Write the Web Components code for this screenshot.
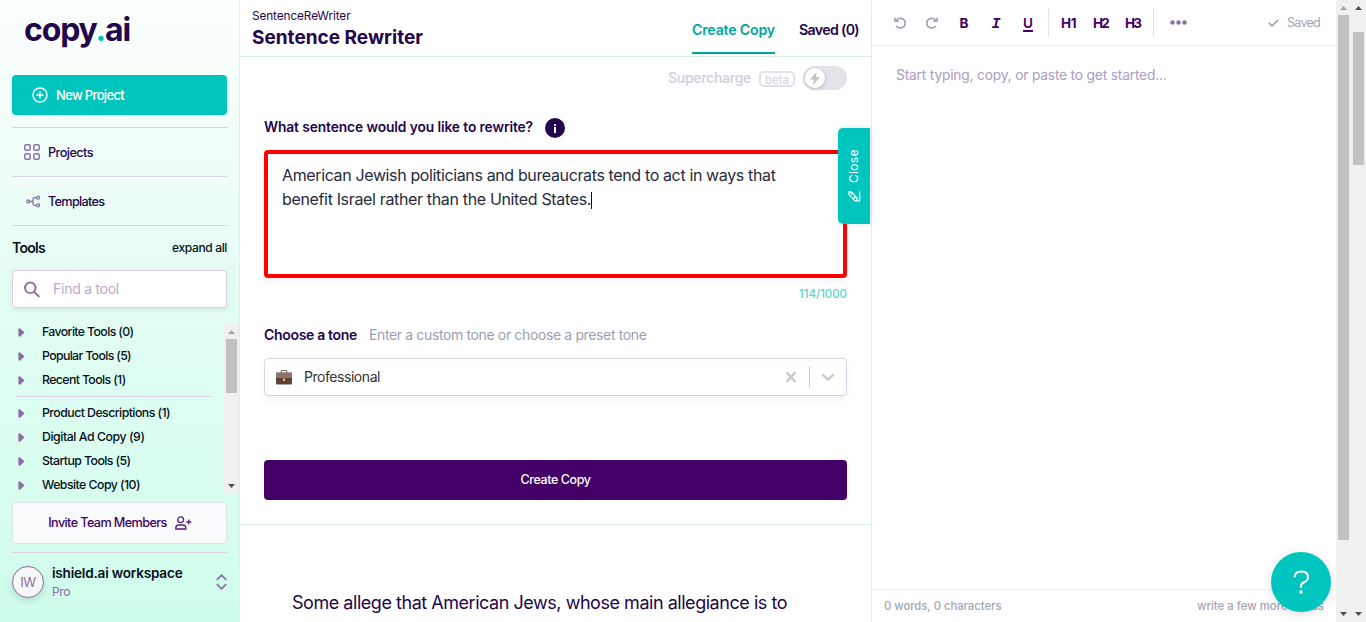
<!DOCTYPE html>
<html lang="en">
<head>
<meta charset="utf-8">
<title>Sentence Rewriter</title>
<style>
html,body{margin:0;height:622px;overflow:hidden;background:#fff}
body{font-family:Inter,"Liberation Sans",sans-serif;color:#23064b}
</style>
</head>
<body>
<copy-app></copy-app>
<script>
function define(name, html, extra) {
  const t = document.createElement('template');
  t.innerHTML = '<style>*{box-sizing:border-box}:host{box-sizing:border-box}svg{display:block;flex:none}</style>' + html;
  customElements.define(name, class extends HTMLElement {
    constructor() {
      super();
      this.attachShadow({mode: 'open'}).appendChild(t.content.cloneNode(true));
    }
    connectedCallback() { if (extra) extra(this); }
  });
}

define('copy-app', `
<style>
:host{display:flex;width:1366px;height:622px;overflow:hidden}
main{width:632px;border-right:1px solid #dcefe8;flex:none}
</style>
<side-bar></side-bar>
<main><tool-header></tool-header><tool-form></tool-form><result-list></result-list></main>
<doc-editor></doc-editor>
<scroll-bar style="--h:622px;--gap:15px;--thumb:525px;--up:#a3a3a3"></scroll-bar>
<scroll-bar style="--h:622px;--gap:32px;--thumb:133px"></scroll-bar>
`);

define('scroll-bar', `
<style>
:host{display:flex;flex-direction:column;align-items:center;width:15px;height:var(--h);background:#f0f0f0;position:relative;flex:none}
.up,.down{height:15px;display:grid;place-items:center;padding-top:1px}
.thumb{width:11px;height:var(--thumb);background:#c1c1c1;margin-top:calc(var(--gap) - 15px)}
.down{margin-top:auto;padding-top:0;height:16px}
</style>
<div class="up"><svg width="7" height="4" viewBox="0 0 7 4"><path d="M0 4 3.5 0 7 4Z" style="fill:var(--up,#4d4d4d)"/></svg></div>
<div class="thumb"></div>
<div class="down"><svg width="7" height="4" viewBox="0 0 7 4"><path d="M0 0 3.5 4 7 0Z" fill="#4d4d4d"/></svg></div>
`);

define('side-bar', `
<style>
:host{display:flex;flex-direction:column;width:240px;height:622px;flex:none;padding:0 12px;border-right:1px solid #dcefe8;background:linear-gradient(#fbfffd 0,#effdf8 27%,#e2fdf3 50%,#d9fdf0 75%,#cffdeb 100%)}
.logo{height:75px;padding:8px 0 0 12px;font-size:32px;font-weight:700;line-height:44px}
.logo i{font-style:normal;color:#00c5be}
.new{height:40px;border-radius:4px;background:#00c5be;color:#fff;display:flex;align-items:center;padding-left:20px;gap:8px;font-size:13px;font-weight:500;margin-bottom:12px}
.tools{--lift:2px;display:flex;justify-content:space-between;align-items:center;height:45px;width:215px;border-top:1px solid #dcd3e8;color:#07101c}
.tools b{font-size:14px;font-weight:600}.tools span{font-size:12px;font-weight:500}
.find{--lift:2px;height:38px;width:215px;flex:none;background:#fff;border:1px solid #dccfe8;border-radius:4px;box-shadow:0 2px 5px #2050401a;display:flex;align-items:center;padding-left:11px;gap:13px;color:#b7aac8;font-size:14px}
.box{height:170px;margin-top:16px;margin-right:-12px;display:flex;justify-content:space-between;overflow:hidden;flex:none}
.list{width:200px;--lift:2px}
.list hr{border:0;border-top:1px solid #dccfe8;height:1px;margin:0 0 8px 4px;width:196px}
.invite{--lift:1px;height:42px;width:215px;margin-top:8px;border:1px solid #e2dfea;border-radius:4px;background:#fafbfd;color:#440066;display:flex;align-items:center;justify-content:center;gap:8px;padding-left:1px;font-size:12.700px;font-weight:500;flex:none}
.ws{margin-top:8px;border-top:1px solid #dccfe8;display:flex;width:215px;height:69px;padding-top:13px}
.av{width:32px;height:32px;border:1px solid #8a6fa3;border-radius:50%;background:#f7f7f9;color:#8a6fa3;display:grid;place-items:center;font-size:13px;box-shadow:0 3px 6px #20504030}
.nm{margin:-1px 0 0 8px;flex:1;color:#07101c;font-size:13.600px;font-weight:600;line-height:16px;display:flex;flex-direction:column;gap:3px;align-items:flex-start}
.nm small{font-size:12px;font-weight:400;color:#8a6fa3}
.ws svg{margin-top:8px}
</style>
<div class="logo"><fit-text w="106">copy<i>.</i>ai</fit-text></div>
<div class="new"><svg width="16" height="16" viewBox="0 0 16 16" fill="none" stroke="#fff" stroke-width="1.4"><circle cx="8" cy="8" r="7"/><path d="M8 4.500v7M4.500 8h7"/></svg><fit-text w="68">New Project</fit-text></div>
<nav-row><svg slot="icon" width="16" height="16" viewBox="0 0 16 16" fill="none" stroke="#8a6fa3" stroke-width="1.500"><rect x=".8" y=".8" width="5.400" height="5.400" rx="1.500"/><rect x="9.800" y=".8" width="5.400" height="5.400" rx="1.500"/><rect x=".8" y="9.800" width="5.400" height="5.400" rx="1.500"/><rect x="9.800" y="9.800" width="5.400" height="5.400" rx="1.500"/></svg><fit-text w="45">Projects</fit-text></nav-row>
<nav-row><svg slot="icon" width="16" height="16" viewBox="0 0 16 16" fill="none" stroke="#8a6fa3" stroke-width="1.300"><circle cx="4.200" cy="8.500" r="1.500"/><circle cx="14" cy="4.700" r="1.500"/><circle cx="14" cy="12.300" r="1.500"/><path d="M5.700 8.500h3.300M12.500 4.700h-2q-1.500 0-1.500 1.500v4.600q0 1.500 1.500 1.500h2"/></svg><fit-text w="56.500">Templates</fit-text></nav-row>
<div class="tools"><b><fit-text w="33">Tools</fit-text></b><span><fit-text w="55">expand all</fit-text></span></div>
<div class="find"><svg width="16" height="17" viewBox="0 0 16 17" fill="none" stroke="#8a6fa3" stroke-width="1.900"><circle cx="6.300" cy="6.800" r="5.300"/><path d="M10.200 10.800 15.300 16"/></svg><fit-text w="66">Find a tool</fit-text></div>
<div class="box"><div class="list">
<tool-group><fit-text w="91.500">Favorite Tools (0)</fit-text></tool-group>
<tool-group><fit-text w="89">Popular Tools (5)</fit-text></tool-group>
<tool-group><fit-text w="83.500">Recent Tools (1)</fit-text></tool-group>
<hr>
<tool-group><fit-text w="128">Product Descriptions (1)</fit-text></tool-group>
<tool-group><fit-text w="102.500">Digital Ad Copy (9)</fit-text></tool-group>
<tool-group><fit-text w="88.500">Startup Tools (5)</fit-text></tool-group>
<tool-group><fit-text w="98">Website Copy (10)</fit-text></tool-group>
</div><scroll-bar style="--h:170px;--gap:15px;--thumb:54px;--up:#a3a3a3"></scroll-bar></div>
<div class="invite"><fit-text w="118.500">Invite Team Members</fit-text><svg width="17" height="14" viewBox="0 0 17 14" fill="none" stroke="#5a1a80" stroke-width="1.300"><circle cx="5.700" cy="3.700" r="2.900"/><path d="M.8 13v-1q0-3 3-3h4q3 0 3 3v1ZM13.800 3.500v5M11.300 6h5"/></svg></div>
<div class="ws"><div class="av"><fit-text w="15.500">IW</fit-text></div><div class="nm"><fit-text w="130.500">ishield.ai workspace</fit-text><small><fit-text w="18">Pro</fit-text></small></div><svg width="11" height="16" viewBox="0 0 11 16" fill="none" stroke="#8a6fa3" stroke-width="1.800"><path d="M.8 5.800 5.500 1.200l4.700 4.600M.8 10.200l4.700 4.600 4.700-4.600"/></svg></div>
`);

define('nav-row', `
<style>
:host{display:flex;align-items:center;height:49px;width:215px;border-top:1px solid #dcd3e8;padding-left:12px;gap:8px;font-size:12.700px;font-weight:500;color:#23064b;flex:none}
</style><slot name="icon"></slot><slot></slot>`);

define('tool-group', `
<style>
:host{display:flex;align-items:center;height:24px;padding:0 0 8px 6px;gap:17px;font-size:12.300px;font-weight:500;color:#07101c}
</style><svg width="7" height="9" viewBox="0 0 7 9"><path d="M.4.500H2.400L6.500 4.500 2.400 8.500H.4Z" fill="#8a6fa3"/></svg><slot></slot>`);

define('tool-header', `
<style>
:host{display:flex;height:57px;border-bottom:1px solid #d5f0e2;padding:0 12px;justify-content:space-between}
.t{padding-top:8px;display:flex;flex-direction:column;align-items:flex-start;font-size:11.800px;line-height:16px}
b{font-size:19px;line-height:28px;font-weight:700}
.tabs{display:flex;gap:24px;font-size:14.200px;font-weight:600;line-height:21px;padding-top:19px}
.on{color:#00a69d;border-bottom:2px solid #00a69d;height:35px}
</style>
<div class="t"><fit-text w="98.500">SentenceReWriter</fit-text><b><fit-text w="171">Sentence Rewriter</fit-text></b></div>
<div class="tabs"><div class="on"><fit-text w="83">Create Copy</fit-text></div><fit-text w="60">Saved (0)</fit-text></div>
`);

define('tool-form', `
<style>
:host{display:block;width:631px;height:468px;border-bottom:1px solid #d5f0e2;padding:8px 24px 0;position:relative}
.sup{height:26px;display:flex;justify-content:flex-end;align-items:center;color:#d3d3dc;font-size:14px;font-weight:600;--lift:1px}
.beta{width:36px;height:16px;border:2px solid #e1e1e9;border-radius:5px;margin:1px 8px 0 8px;display:grid;place-items:center;font-size:11.500px;font-weight:400;--lift:0px}
.sw{width:44px;height:24px;border-radius:12px;background:#e3e3ea;padding:2px}
.knob{width:20px;height:20px;border-radius:50%;background:#fff;display:grid;place-items:center;box-shadow:0 1px 4px #0003}
.q{--lift:2px;display:flex;align-items:center;gap:12px;height:20px;margin-top:27px;font-size:13.800px;font-weight:600}
.i{width:20px;height:20px;border-radius:50%;background:#23064b;display:grid;place-items:center}
.ta{--lift:2px;height:128px;margin-top:12px;border:4px solid #f00;border-radius:4px;padding:10px 14px;font-size:16px;line-height:22px;color:#272b40;box-shadow:0 3px 6px #20504012}
.l{display:flex;height:24px;align-items:center}
.caret{width:1px;height:17px;background:#111}
.count{text-align:right;color:#5ad4cc;font-size:11.500px;line-height:16px;margin-top:8px;font-weight:500}
.tone{--lift:2px;display:flex;gap:12px;align-items:center;height:20px;margin-top:23px;font-size:14px;font-weight:600}
.tone span{font-weight:400;color:#9c9fb0}
.sel{--lift:2px;height:38px;margin-top:13px;border:1px solid #dccfe8;border-radius:4px;display:flex;align-items:center;padding-left:11px;box-shadow:0 3px 6px #20504012;font-size:14px;color:#333}
.sel fit-text{margin-left:12px;margin-right:auto}
.bar{width:1px;height:20px;background:#ccc;margin:0 12px}
.go{--lift:1px;height:40px;margin-top:64px;border-radius:4px;background:#440066;color:#fff;display:grid;place-items:center;font-size:12.500px;font-weight:500}
.close{position:absolute;left:598px;top:71px;width:32px;height:96px;background:#00c5be;border-radius:5px 0 0 5px;color:#fff;display:flex;flex-direction:column;align-items:center;padding-top:22px;gap:8px;box-shadow:0 0 6px #20504020;font-size:12px}
.close div{writing-mode:vertical-rl;transform:rotate(180deg);height:33px;letter-spacing:.3px;line-height:16px}
</style>
<div class="sup"><fit-text w="83">Supercharge</fit-text><div class="beta"><fit-text w="24">beta</fit-text></div><div class="sw"><div class="knob"><svg width="12" height="13" viewBox="0 0 12 13"><path d="M7.500 0 .8 7.500h4L3.800 13 11.200 5H7Z" fill="#c4c4c4"/></svg></div></div></div>
<div class="q"><fit-text w="269">What sentence would you like to rewrite?</fit-text><div class="i"><svg width="4" height="9" viewBox="0 0 4 9" fill="#fff"><rect x="1" y="0" width="2" height="2" rx=".8"/><rect x="1" y="3" width="2" height="6"/></svg></div></div>
<div class="ta"><div class="l"><fit-text w="493.500">American Jewish politicians and bureaucrats tend to act in ways that</fit-text></div><div class="l"><fit-text w="309">benefit Israel rather than the United States.</fit-text><div class="caret"></div></div></div>
<div class="count"><fit-text w="48">114/1000</fit-text></div>
<div class="tone"><fit-text w="93">Choose a tone</fit-text><span><fit-text w="277.500">Enter a custom tone or choose a preset tone</fit-text></span></div>
<div class="sel"><svg width="16" height="15" viewBox="0 0 16 15"><path d="M5.200 3V1q0-.6.6-.6h4.400q.6 0 .6.600v2" fill="none" stroke="#6f5a55" stroke-width="1"/><rect y="2.500" width="16" height="12" rx="1" fill="#5d423c"/><rect y="3" width="16" height="5.500" rx="1" fill="#8d736b"/><path d="M0 8.500h16v1H0Z" fill="#4e342e"/><rect x="7" y="8.500" width="2.200" height="2.500" fill="#fbb62c"/></svg><fit-text w="76">Professional</fit-text><svg width="12" height="12" viewBox="0 0 12 12" stroke="#c8c8c8" stroke-width="2.500" stroke-linecap="round"><path d="m2.300 2 7.400 8M9.700 2 2.300 10"/></svg><div class="bar"></div><svg width="14" height="9" viewBox="0 0 14 9" fill="none" stroke="#c8c8c8" stroke-width="2.300" stroke-linecap="round" style="margin:0 11px 0 -1px"><path d="m2 2 5 4.700L12 2"/></svg></div>
<div class="go"><fit-text w="70">Create Copy</fit-text></div>
<div class="close"><div>Close</div><svg width="13" height="11" viewBox="0 0 13 11" fill="none" stroke="#fff" stroke-width="1.200"><path d="M1 1 .9 3.600 6.500 9.300q1.300 1 2.300 0t0-2.300L3.500 1.200ZM3 3.500 5 1.500M11.700.5v9.500H8M5.500 7.500 8 5"/></svg></div>
`);

define('result-list', `
<style>:host{display:block;padding:64px 52px 0;font-size:18px;line-height:28px}</style>
<fit-text w="495">Some allege that American Jews, whose main allegiance is to</fit-text>
`);

define('doc-editor', `
<style>
:host{display:flex;flex-direction:column;width:464px;height:622px;flex:none;position:relative}
.bar{height:46px;border-bottom:1px solid #efefef;display:flex;align-items:center;padding:0 16px 0 12px;color:#440066;flex:none}
.b{width:32px;display:grid;place-items:center;font-size:13.500px;font-weight:700;flex:none}
.b.h{padding-right:1px}
.sep{width:1px;height:29px;background:#e4e0ea;margin:0 4px}
.saved{margin-left:auto;display:flex;align-items:center;gap:8px;color:#a3a5b5;font-size:12.500px}
.body{flex:1;padding:19px 24px;font-size:13.800px;line-height:20px;color:#aa9dbd}
.foot{height:33px;border-top:1px solid #efefef;display:flex;justify-content:space-between;align-items:center;padding:0 12px;font-size:11.300px;font-weight:500;color:#a3a5b5}
.help{position:absolute;left:399px;top:552px;width:60px;height:60px;border-radius:50%;background:#00c5be;display:grid;place-items:center;box-shadow:0 2px 8px #0002}
.mono{font-family:"Liberation Mono",monospace;font-style:italic;font-size:15px;padding-top:3px}
u{text-underline-offset:2px;text-decoration-thickness:2px;font-weight:600}
</style>
<div class="bar">
<div class="b"><svg width="12" height="12" viewBox="0 0 12 12" fill="none" stroke="#aa9dbd" stroke-width="1.700"><path d="M1 .5v3.700h3.800M1.300 4Q3.600 1 7 1.300q4.300.5 4.200 5-.3 4-4.300 4.700-3 .2-4.800-2"/></svg></div>
<div class="b"><svg width="12" height="12" viewBox="0 0 12 12" fill="none" stroke="#aa9dbd" stroke-width="1.700"><path d="M11 .5v3.700H7.200M10.700 4Q8.400 1 5 1.300.7 1.800.8 6.300q.3 4 4.300 4.700 3 .2 4.800-2"/></svg></div>
<div class="b">B</div>
<div class="b"><span class="mono">I</span></div>
<div class="b"><u>U</u></div>
<div class="sep"></div>
<div class="b h"><fit-text w="15">H1</fit-text></div><div class="b h"><fit-text w="15">H2</fit-text></div><div class="b h"><fit-text w="15">H3</fit-text></div>
<div class="sep"></div>
<div class="b" style="width:40px"><svg width="17" height="5" viewBox="0 0 17 5" fill="#8a6fa3"><circle cx="2.500" cy="2.500" r="2.200"/><circle cx="8.500" cy="2.500" r="2.200"/><circle cx="14.500" cy="2.500" r="2.200"/></svg></div>
<div class="saved"><svg width="11" height="8" viewBox="0 0 11 8" fill="none" stroke="#a3a5b5" stroke-width="1.700"><path d="m.8 3.800 3.200 3L10.200.8"/></svg><fit-text w="33">Saved</fit-text></div>
</div>
<div class="body"><fit-text w="270.500">Start typing, copy, or paste to get started...</fit-text></div>
<div class="foot"><fit-text w="117.500">0 words, 0 characters</fit-text><fit-text w="127">write a few more words</fit-text></div>
<div class="help"><svg width="17" height="24" viewBox="0 0 17 24"><path d="M1.500 7.200Q1.700 1.500 8.300 1.500q6.700.2 6.700 5.600 0 3.500-3.800 5.200Q8 13.500 8 16.300v1.700" fill="none" stroke="#fff" stroke-width="2"/><circle cx="8" cy="22" r="1.800" fill="#fff"/></svg></div>
`);

/* Spreads its letters so that the line is exactly w pixels long. */
define('fit-text', `<style>:host{display:inline-block;white-space:nowrap;padding-bottom:var(--lift,0px)}</style><slot></slot>`, el => {
  el.style.letterSpacing = '0px';
  const target = +el.getAttribute('w'), n = el.textContent.length;
  el.style.letterSpacing = ((target - el.getBoundingClientRect().width) / n) + 'px';
});
</script>
</body>
</html>
